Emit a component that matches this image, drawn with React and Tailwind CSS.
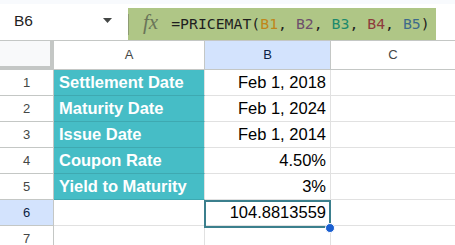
import React from "react";

const ARIAL = { fontFamily: '"Liberation Sans", Arial, sans-serif' };

const rows = [
  { n: "1", a: "Settlement Date", b: "Feb 1, 2018" },
  { n: "2", a: "Maturity Date", b: "Feb 1, 2024" },
  { n: "3", a: "Issue Date", b: "Feb 1, 2014" },
  { n: "4", a: "Coupon Rate", b: "4.50%" },
  { n: "5", a: "Yield to Maturity", b: "3%" },
  { n: "6", a: "", b: "104.8813559", sel: true },
  { n: "7", a: "", b: "" },
];

export default function App() {
  return (
    <div className="w-[455px] h-[245px] overflow-hidden bg-white relative" style={ARIAL}>
      {/* top bar */}
      <div className="h-[4px] bg-[#f8fafd]" />
      <div className="h-[37px] flex border-b border-[#c4c7c5]">
        <div className="w-[128px] h-[36px] flex items-center pl-[14px] pr-[16px] justify-between">
          <span className="text-[15.5px] text-[#1f1f1f] leading-none pb-[2px]">B6</span>
          <svg width="9" height="5" viewBox="0 0 9 5" className="mb-[4px]">
            <path d="M0 0 L9 0 L4.5 5 Z" fill="#444746" />
          </svg>
        </div>
        <div className="w-[308px] h-[32px] mt-[4px] bg-[#afc686] flex items-center">
          <div className="w-px h-[21px] bg-[#8e9c73]" />
          <span
            className="ml-[14px] text-[21px] italic text-[#6a7559] leading-none pb-[3px]"
            style={{ fontFamily: '"Liberation Serif", "DejaVu Serif", serif' }}
          >
            fx
          </span>
          <span
            className="ml-[13px] text-[14.8px] text-[#1f1f1f] whitespace-pre leading-none"
            style={{ fontFamily: '"DejaVu Sans Mono", "Liberation Mono", monospace' }}
          >
            =PRICEMAT(<span className="text-[#c0861a]">B1</span>, <span className="text-[#6e4f6c]">B2</span>,{" "}
            <span className="text-[#1d8a6c]">B3</span>, <span className="text-[#8e3b3b]">B4</span>,{" "}
            <span className="text-[#3e6b8b]">B5</span>)
          </span>
        </div>
      </div>

      {/* grid */}
      <div className="relative">
        <div className="h-[29px] flex">
          <div className="w-[54px] h-[29px] bg-[#f8f9fa] border-r-[4px] border-b-[4px] border-[#c4c7c5]" />
          <div className="w-[151px] h-[29px] border-r border-b border-[#c4c7c5] flex items-center justify-center text-[13px] text-[#444746]">
            A
          </div>
          <div className="w-[126px] h-[29px] bg-[#d3e3fd] border-r border-b border-[#c4c7c5] flex items-center justify-center text-[13px] text-[#0b1f45] font-medium">
            B
          </div>
          <div className="flex-1 h-[29px] border-b border-[#c4c7c5] flex items-center justify-center text-[13px] text-[#444746]">
            C
          </div>
        </div>
        {rows.map((r) => {
          const teal = r.a !== "";
          return (
            <div key={r.n} className="h-[26px] flex">
              <div
                className={
                  "w-[54px] h-[26px] border-r border-b border-[#c4c7c5] flex items-center justify-center text-[13px] " +
                  (r.sel ? "bg-[#d3e3fd] text-[#0b1f45] font-medium" : "text-[#444746]")
                }
              >
                {r.n}
              </div>
              <div
                className={
                  "w-[151px] h-[26px] border-r border-b flex items-center pl-[5px] " +
                  (teal ? "bg-[#46bdc6] border-b-[#3ea9b1] border-r-[#e1e1e1]" : "border-[#e1e1e1]")
                }
              >
                <span className="text-[16.5px] font-bold text-white leading-none">{r.a}</span>
              </div>
              <div className="w-[126px] h-[26px] border-r border-b border-[#e1e1e1] flex items-center justify-end pr-[4px]">
                <span className="text-[16.5px] text-black leading-none">{r.b}</span>
              </div>
              <div className="flex-1 h-[26px] border-b border-[#e1e1e1]" />
            </div>
          );
        })}
        {/* selection overlay */}
        <div className="absolute left-[204px] top-[159px] w-[127px] h-[28px] border-[2px] border-[#3b7f8d] pointer-events-none" />
        <div className="absolute left-[325px] top-[182px] w-[10px] h-[10px] rounded-full bg-[#1a5fd0] border border-white" />
      </div>
    </div>
  );
}
